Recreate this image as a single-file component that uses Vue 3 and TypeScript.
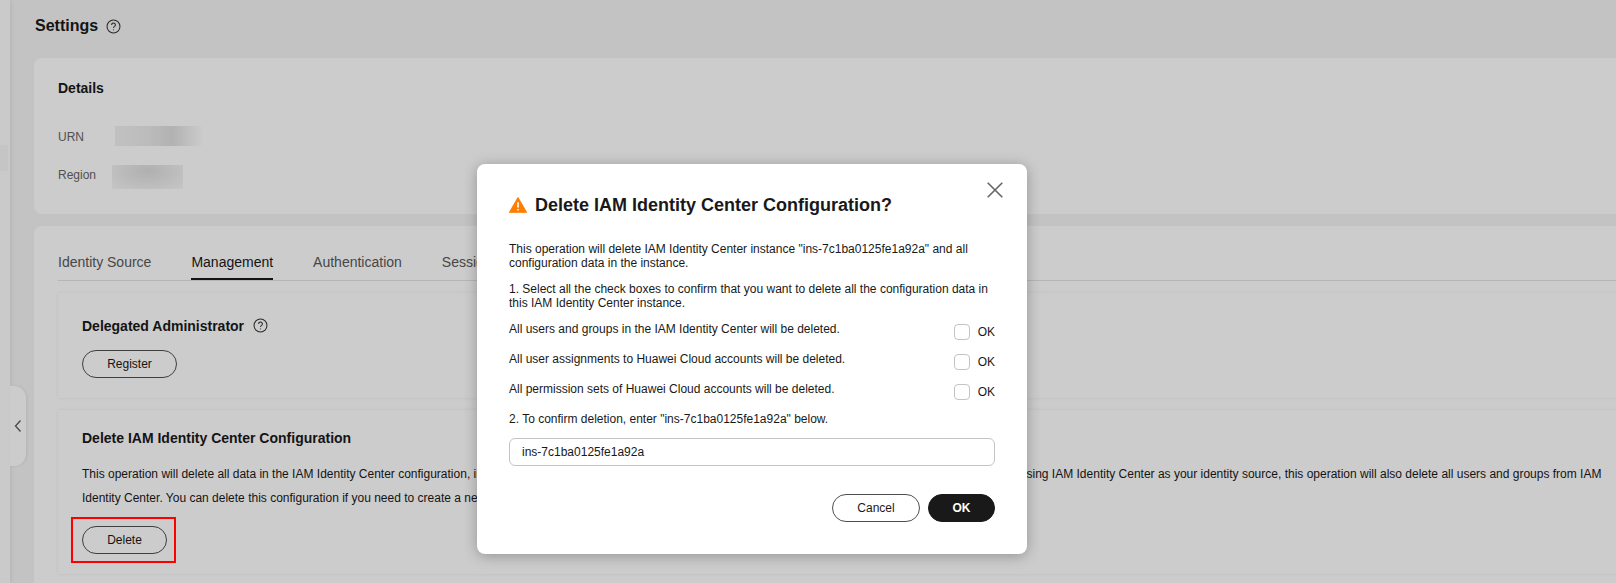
<script setup lang="ts">
const instanceId = 'ins-7c1ba0125fe1a92a'
const confirmations: string[] = [
  'All users and groups in the IAM Identity Center will be deleted.',
  'All user assignments to Huawei Cloud accounts will be deleted.',
  'All permission sets of Huawei Cloud accounts will be deleted.',
]
const tabs: string[] = ['Identity Source', 'Management', 'Authentication', 'Session']
</script>

<template>
  <div class="page">
    <aside class="rail"><span class="rail-mark"></span></aside>
    <main class="main">
      <header class="head">
        <h1>Settings</h1>
        <svg class="help help-lg" viewBox="0 0 16 16"><circle cx="8" cy="8" r="6.9" /><path d="M6 6.3a2 2 0 1 1 3.2 1.6c-.8.5-1.2.9-1.2 1.7" /><path d="M8 11.2v.9" /></svg>
      </header>
      <section class="card details">
        <h2>Details</h2>
        <div class="field urn"><span>URN</span><i class="smudge smudge-urn"></i></div>
        <div class="field region"><span>Region</span><i class="smudge smudge-region"></i></div>
      </section>
      <section class="card body">
        <nav class="tabs">
          <span v-for="tab in tabs" :key="tab" class="tab" :class="{ active: tab === 'Management' }">{{ tab }}</span>
        </nav>
        <div class="panel admin">
          <h3>Delegated Administrator
            <svg class="help" viewBox="0 0 16 16"><circle cx="8" cy="8" r="6.9" /><path d="M6 6.3a2 2 0 1 1 3.2 1.6c-.8.5-1.2.9-1.2 1.7" /><path d="M8 11.2v.9" /></svg>
          </h3>
          <button class="btn register">Register</button>
        </div>
        <div class="panel remove">
          <h3>Delete IAM Identity Center Configuration</h3>
          <div class="desc">
            <span>This operation will delete all data in the IAM Identity Center configuration, including users, groups, permission sets, assignments to cloud accounts, and other settings. If you are using IAM Identity Center as your identity source, this operation will also delete all users and groups from IAM</span>
            <span>Identity Center. You can delete this configuration if you need to create a new one in another region.</span>
          </div>
          <button class="btn delete">Delete</button>
        </div>
      </section>
    </main>
    <button class="collapse" aria-label="Collapse">
      <svg viewBox="0 0 8 14"><path d="M6.5 1.5 1.5 7l5 5.5" /></svg>
    </button>

    <div class="overlay">
      <span class="callout"></span>
      <div class="modal">
        <svg class="close" viewBox="0 0 16 16"><path d="M.7.7l14.6 14.6M15.3.7.7 15.3" /></svg>
        <div class="title">
          <svg class="warn" viewBox="0 0 18 16"><path d="M9 .8.6 15.2h16.8z" /><path class="bang" d="M9 5.2v5.4M9 12v1.6" /></svg>
          <span>Delete IAM Identity Center Configuration?</span>
        </div>
        <p class="para">This operation will delete IAM Identity Center instance "{{ instanceId }}" and all configuration data in the instance.</p>
        <p class="para">1. Select all the check boxes to confirm that you want to delete all the configuration data in this IAM Identity Center instance.</p>
        <div v-for="line in confirmations" :key="line" class="row">
          <span>{{ line }}</span>
          <label class="check"><i class="box"></i>OK</label>
        </div>
        <p class="para enter">2. To confirm deletion, enter "{{ instanceId }}" below.</p>
        <div class="input">{{ instanceId }}</div>
        <div class="actions">
          <button class="btn cancel">Cancel</button>
          <button class="btn ok">OK</button>
        </div>
      </div>
    </div>
  </div>
</template>

<style>
html, body { margin: 0; background: #f4f4f4; }
</style>

<style scoped>
.page {
  position: relative;
  display: flex;
  width: 1616px;
  height: 583px;
  overflow: hidden;
  background: #f4f4f4;
  color: #191919;
  font: 12px/14px "Liberation Sans", Arial, sans-serif;
}
.rail {
  position: relative;
  flex: none;
  width: 10px;
  background: #fdfdfd;
  box-shadow: 1px 0 4px rgba(0, 0, 0, .08);
}
.rail-mark {
  position: absolute;
  top: 145px;
  left: 0;
  width: 8px;
  height: 26px;
  background: #f7f7f7;
}
.main {
  flex: none;
  width: 1660px;
  padding-left: 24px;
}
.head {
  display: flex;
  align-items: center;
  gap: 8px;
  height: 58px;
  padding-bottom: 6px;
  box-sizing: border-box;
}
h1 { margin: 0; font-size: 16px; line-height: 20px; font-weight: 700; padding-left: 1px; }
.help { width: 15px; height: 15px; fill: none; stroke: #333; stroke-width: 1.1; vertical-align: -2px; margin-left: 5px; }
.help-lg { margin-left: 0; }
.card { background: #fff; border-radius: 8px 0 0 8px; }
.details { height: 156px; padding: 0 24px; box-sizing: border-box; }
h2 { margin: 0; padding-top: 21px; font-size: 14px; line-height: 18px; font-weight: 700; }
.field { display: flex; align-items: center; color: #666; }
.urn { margin-top: 29px; height: 20px; }
.urn span { width: 57px; margin-top: 2px; }
.region { margin-top: 19px; height: 24px; }
.region span { width: 54px; margin-bottom: 4px; }
.smudge { display: block; height: 100%; }
.smudge-urn { width: 88px; background: linear-gradient(90deg, #f1f1f1, #ececec 35%, #dfdfdf 65%, #fafafa 95%, #fff); }
.smudge-region { width: 71px; background: radial-gradient(ellipse at 50% 25%, #dcdcdc, #f1f1f1 75%, #f7f7f7); }
.body { margin-top: 12px; height: 380px; padding: 0 24px; box-sizing: border-box; }
.tabs {
  display: flex;
  gap: 40px;
  height: 55px;
  box-sizing: border-box;
  padding-top: 26px;
  border-bottom: 1px solid #e4e4e4;
  font-size: 14px;
  line-height: 20px;
  color: #595959;
}
.tab { height: 28px; box-sizing: border-box; }
.tab.active { color: #191919; border-bottom: 2px solid #191919; }
.panel { padding: 0 24px; background: #fff; box-shadow: 0 0 3px rgba(0, 0, 0, .08); box-sizing: border-box; }
.admin { margin-top: 12px; height: 105px; padding-top: 24px; }
.remove { margin-top: 12px; height: 164px; padding-top: 19px; }
h3 { margin: 0; font-size: 14px; line-height: 18px; font-weight: 700; }
.btn {
  display: block;
  box-sizing: border-box;
  height: 28px;
  padding: 0;
  border: 1px solid #4f4f4f;
  border-radius: 14px;
  background: #fff;
  color: #191919;
  font: 12px/26px "Liberation Sans", Arial, sans-serif;
}
.register { width: 95px; margin-top: 15px; }
.desc { margin: 15px 0 0; line-height: 24px; }
.desc span { display: block; white-space: nowrap; }
.delete { width: 85px; margin-top: 16px; }
.collapse {
  position: absolute;
  left: 10px;
  top: 386px;
  width: 16px;
  height: 80px;
  padding: 0;
  border: 0;
  border-radius: 0 12px 12px 0;
  background: #fff;
  box-shadow: 1px 0 3px rgba(0, 0, 0, .08);
  display: flex;
  align-items: center;
  justify-content: center;
}
.collapse svg { width: 8px; height: 14px; fill: none; stroke: #595959; stroke-width: 1.3; }
.overlay {
  position: absolute;
  inset: 0;
  background: rgba(0, 0, 0, .2);
}
.callout {
  position: absolute;
  left: 71px;
  top: 517px;
  width: 105px;
  height: 46px;
  box-sizing: border-box;
  border: 2px solid #f00;
}
.modal {
  position: absolute;
  left: 477px;
  top: 164px;
  width: 550px;
  height: 390px;
  box-sizing: border-box;
  padding: 29px 32px 0;
  border-radius: 8px;
  background: #fff;
  box-shadow: 0 2px 14px rgba(0, 0, 0, .28);
}
.close { position: absolute; right: 24px; top: 18px; width: 16px; height: 16px; fill: none; stroke: #666; stroke-width: 1.6; }
.title {
  display: flex;
  align-items: center;
  gap: 8px;
  height: 24px;
  font-size: 18px;
  font-weight: 700;
  line-height: 24px;
  margin-bottom: 25px;
}
.warn { width: 18px; height: 16px; flex: none; }
.warn > path:first-child { fill: #ff7d00; stroke: #ff7d00; stroke-width: 1.2; stroke-linejoin: round; }
.bang { fill: none; stroke: #fff; stroke-width: 1.6; }
.para { margin: 0 0 12px; }
.row {
  display: flex;
  justify-content: space-between;
  align-items: flex-start;
  height: 30px;
}
.check { display: flex; align-items: center; gap: 8px; height: 16px; margin-top: 2px; }
.box {
  display: block;
  box-sizing: border-box;
  width: 16px;
  height: 16px;
  border: 1px solid #c4c4c4;
  border-radius: 4px;
  background: #fff;
}
.para.enter { margin-top: 0; }
.input {
  box-sizing: border-box;
  height: 28px;
  padding-left: 12px;
  border: 1px solid #c4c4c4;
  border-radius: 6px;
  line-height: 26px;
}
.actions { display: flex; justify-content: flex-end; gap: 8px; margin-top: 28px; }
.cancel { width: 88px; }
.ok { width: 67px; background: #191919; border-color: #191919; color: #fff; font-weight: 700; }
</style>
